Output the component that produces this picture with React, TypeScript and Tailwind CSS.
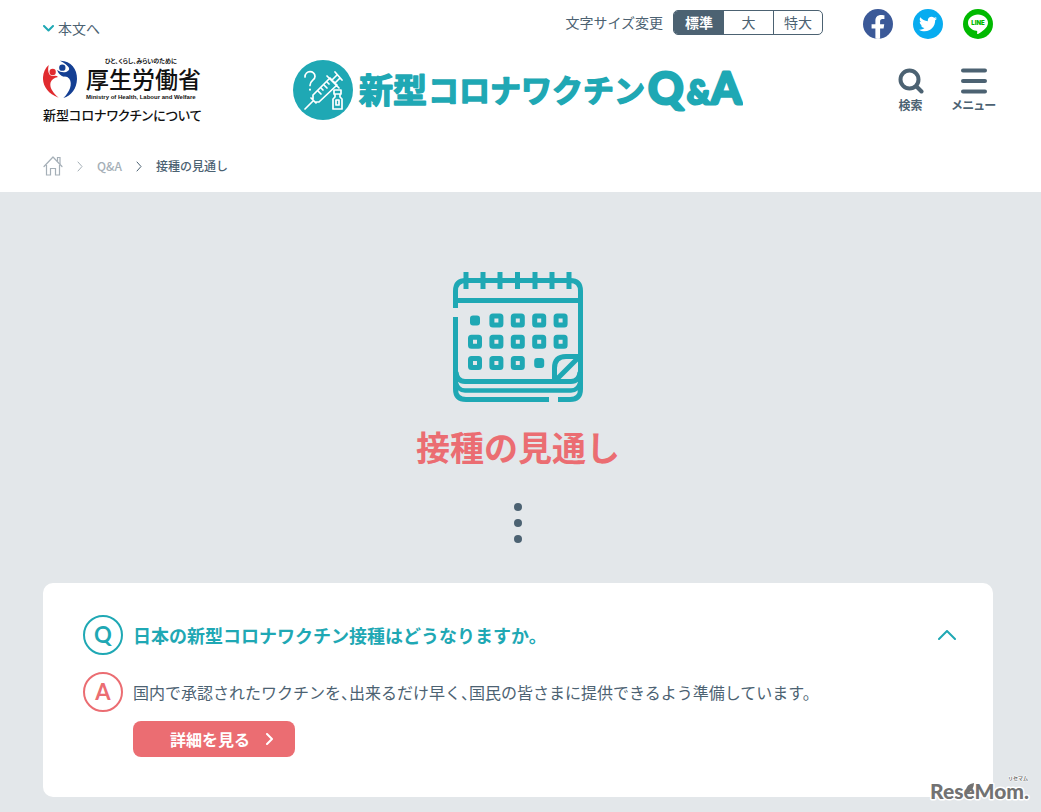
import type { ReactNode } from 'react';
import { FaFacebookF, FaTwitter } from 'react-icons/fa';

const FONT = "font-['Noto_Sans_CJK_JP',sans-serif]";

const SIZES = [
  { id: 'normal', label: '標準', width: 'w-[50px]' },
  { id: 'large', label: '大', width: 'w-[49px]' },
  { id: 'xlarge', label: '特大', width: 'w-[49px]' },
];

// kind: full = outlined day, dot = small filled day
const DAYS = [
  ['dot', 'full', 'full', 'full', 'full'],
  ['full', 'full', 'full', 'full', 'full'],
  ['full', 'full', 'full', 'dot', 'none'],
];

function MinistryLogo() {
  return (
    <svg width="162" height="67" viewBox="0 0 162 67" className="block" role="img" aria-label="厚生労働省">
      <g transform="translate(-1 3) scale(0.3333)">
        <path
          fill="#e02b2f"
          d="M20 18 C-8 44 -4 98 50 116 C30 98 22 84 26 70 Q30 58 48 54 Q44 48 32 51 Q14 50 20 18 Z"
        />
        <circle cx="32" cy="39" r="9.500" fill="#e02b2f" />
        <path
          fill="#143f93"
          d="M54 5 C86 4 106 30 105 60 C104 90 88 110 64 117 C84 98 92 74 82 59 Q76 52 66 53 Q52 50 45 33 Q60 43 74 38 Q96 28 54 5 Z"
        />
        <circle cx="61" cy="26" r="9.500" fill="#143f93" />
      </g>
      <g fill="#111" className="font-['Noto_Sans_CJK_JP',sans-serif] [font-feature-settings:'palt']">
        <text x="62" y="7" fontSize="6" fontWeight="700">
          ひと、くらし、みらいのために
        </text>
        <text x="43" y="32" fontSize="23" fontWeight="500">
          厚生労働省
        </text>
        <text x="0" y="64" fontSize="13" fontWeight="500">
          新型コロナワクチンについて
        </text>
      </g>
      <text x="43" y="43" fontSize="6" fontWeight="700" fill="#111" className="font-['Liberation_Sans',sans-serif]">
        Ministry of Health, Labour and Welfare
      </text>
    </svg>
  );
}

function SiteLogo() {
  return (
    <svg width="450" height="61" viewBox="0 0 450 61" className="block" role="img" aria-label="新型コロナワクチンQ&A">
      <circle cx="30" cy="30" r="30" fill="#1fa8b4" />
      <g fill="none" stroke="#fff" strokeWidth="1.700" strokeLinecap="round" strokeLinejoin="round">
        <path d="M12 17 C12 10 22 10 22 16.500 C22 20.500 17 20 17 25.500" />
        <path d="M17 29.500 V29.700" strokeWidth="2" />
        <path d="M12 49 L20 41 M18 38 L23 43 M20 39 L20 35 L37 18 L44 25 L26 42 L22 42 M34 16 L46 28 M39 20 L44 15 M42 23 L47 18 M42 12 L49 20" />
        <path d="M25 31 L28 34 M28 28 L30 30 M31 25 L34 28 M34 22 L36 24" />
        <path d="M41 30 H48 V34 H41 Z M42 34 V37 L40 39 V49 H49 V39 L47 37 V34" />
        <path d="M43 40 H46 V45 H43 Z" />
      </g>
      <g
        fill="#1fa8b4"
        stroke="#1fa8b4"
        strokeWidth="1.500"
        strokeLinejoin="round"
        fontWeight="700"
        className="font-['Noto_Sans_CJK_JP',sans-serif]"
      >
        <text x="66" y="43" fontSize="34">
          新型
        </text>
        <text x="135" y="42" fontSize="31">
          コロナワクチン
        </text>
      </g>
      <g
        fill="#1fa8b4"
        stroke="#1fa8b4"
        strokeWidth="3"
        strokeLinejoin="round"
        fontWeight="700"
        className="font-['Lato',sans-serif]"
      >
        <text x="355" y="44" fontSize="44">
          Q
        </text>
        <text x="394" y="44" fontSize="32">
          &amp;
        </text>
        <text x="418" y="44" fontSize="44">
          A
        </text>
      </g>
    </svg>
  );
}

function LineIcon() {
  return (
    <svg width="30" height="30" viewBox="0 0 30 30" className="block" aria-hidden>
      <circle cx="15" cy="15" r="15" fill="#00b900" />
      <path
        fill="#fff"
        d="M15 5.500 C9.500 5.500 5 9.200 5 13.700 C5 17.800 8.600 21.200 13.500 21.800 C14.500 22 14.300 22.800 14.100 24.500 C14.100 25.300 14.800 25.100 15.500 24.700 C18.500 23 25 18.800 25 13.700 C25 9.200 20.500 5.500 15 5.500 Z"
      />
      <text
        x="15"
        y="16"
        fontSize="6"
        fontWeight="900"
        fill="#00b900"
        textAnchor="middle"
        className="font-['Inter',sans-serif]"
      >
        LINE
      </text>
    </svg>
  );
}

function HomeIcon() {
  return (
    <svg width="20" height="20" viewBox="0 0 20 20" className="block" fill="none" stroke="#a5afb7" strokeWidth="1.200" aria-hidden>
      <path d="M1 10.500 L10 1 L19 10.500" strokeLinejoin="round" strokeLinecap="round" />
      <path d="M14.500 5 V1.500 H17 V8" />
      <path d="M3.500 9 V19 H7.500 V12.500 H12.500 V19 H16.500 V9" />
    </svg>
  );
}

function Chevron({ className, d, box, width = 2 }: { className: string; d: string; box: string; width?: number }) {
  return (
    <svg
      viewBox={box}
      className={`block shrink-0 ${className}`}
      fill="none"
      stroke="currentColor"
      strokeWidth={width}
      strokeLinecap="round"
      strokeLinejoin="round"
      aria-hidden
    >
      <path d={d} />
    </svg>
  );
}

function CalendarIcon() {
  return (
    <svg width="130" height="130" viewBox="0 0 130 130" className="block" fill="none" stroke="#1fa8b4" strokeWidth="5" aria-hidden>
      <path d="M2.500 36 V19 Q2.500 8.500 13 8.500 H117 Q127.500 8.500 127.500 19 V117 Q127.500 127.500 117 127.500 H105" />
      <path d="M2.500 45 V117 Q2.500 127.500 13 127.500 H96" />
      <path d="M3 28.500 H127" />
      {[13, 30, 47, 64.5, 82, 99, 116].map((x) => (
        <path key={x} d={`M${x} 0 V17`} />
      ))}
      <path d="M3 100 Q4 109.500 12 109.500 H118 Q126 109.500 127 100" />
      <path d="M3 111 Q5 118.500 12 118.500 H118 Q125 118.500 127 111" strokeWidth="4.500" />
      <path d="M101.500 109 V96 Q101.500 84.500 113 84.500 H127 M102 109 L127 84" />
      {DAYS.map((row, r) =>
        row.map((kind, c) => {
          const x = 22 + c * 21.4;
          const y = 48.5 + r * 21.2;
          if (kind === 'none') return null;
          return kind === 'dot' ? (
            <rect key={`${r}-${c}`} x={x - 5} y={y - 5} width="10" height="10" rx="3" fill="#1fa8b4" stroke="none" />
          ) : (
            <rect key={`${r}-${c}`} x={x - 4.5} y={y - 4.5} width="9" height="9" rx="1" />
          );
        }),
      )}
    </svg>
  );
}

function Badge({ color, children }: { color: string; children: ReactNode }) {
  return (
    <span
      className={`flex h-10 w-10 shrink-0 items-center justify-center rounded-full border-2 font-['Lato',sans-serif] text-[22px] leading-6 font-bold ${color}`}
    >
      {children}
    </span>
  );
}

function Watermark() {
  return (
    <svg width="104" height="34" viewBox="0 0 104 34" className="absolute right-2 bottom-1 block" role="img" aria-label="ReseMom">
      <g fill="#727272" stroke="#fff" strokeLinejoin="round" style={{ paintOrder: 'stroke' }}>
        <text x="1" y="25" fontSize="21" fontWeight="900" strokeWidth="3" className="font-['Lato',sans-serif]">
          ReseMom.
        </text>
        <text x="79" y="6" fontSize="5" fontWeight="700" strokeWidth="1" className="font-['Noto_Sans_CJK_JP',sans-serif]">
          リセマム
        </text>
      </g>
      <path d="M37 17 Q37 10 45 9 Q45 16 39 19 Z" fill="#727272" />
    </svg>
  );
}

function Comma() {
  return <span className="[font-feature-settings:'halt']">、</span>;
}

function Header() {
  return (
    <header className="bg-white pr-12 pl-[43px]">
      <div className="flex h-12 items-center">
        <a href="#main" className="mt-2 flex items-center gap-1 text-sm leading-5">
          <Chevron className="h-[7px] w-[11px] text-[#1fa8b4]" box="0 0 11 7" d="M1 1 L5.500 5.500 L10 1" />
          本文へ
        </a>
        <div className="ml-auto flex items-center gap-10">
          <div className="flex items-center gap-[10px] pb-1" role="group" aria-label="文字サイズ変更">
            <span className="text-sm leading-5">文字サイズ変更</span>
            <div className="flex h-[25px] overflow-hidden rounded-[5px] border border-[#4c6272]">
              {SIZES.map((s, i) => (
                <button
                  key={s.id}
                  type="button"
                  aria-pressed={i === 0}
                  className={`${s.width} text-sm leading-5 ${i === 0 ? 'bg-[#4c6272] font-bold text-white' : ''} ${i === 2 ? 'border-l border-[#4c6272]' : ''}`}
                >
                  {s.label}
                </button>
              ))}
            </div>
          </div>
          <div className="flex items-center gap-5">
            <a
              href="#facebook"
              aria-label="Facebook"
              className="flex h-[30px] w-[30px] items-end justify-center overflow-hidden rounded-full bg-[#3b5998] text-white"
            >
              <FaFacebookF className="h-6 w-6" />
            </a>
            <a
              href="#twitter"
              aria-label="Twitter"
              className="flex h-[30px] w-[30px] items-center justify-center rounded-full bg-[#08acf0] text-white"
            >
              <FaTwitter className="h-[18px] w-[18px]" />
            </a>
            <a href="#line" aria-label="LINE">
              <LineIcon />
            </a>
          </div>
        </div>
      </div>

      <div className="grid grid-cols-[1fr_auto_1fr] items-start pt-2">
        <a href="#top" className="justify-self-start">
          <MinistryLogo />
        </a>
        <h1 className="pt-1">
          <a href="#qa">
            <SiteLogo />
          </a>
        </h1>
        <nav className="-mr-[3px] flex gap-7 justify-self-end pt-3 text-xs leading-4 font-bold">
          <button type="button" className="flex flex-col items-center gap-[3px]">
            <svg width="26" height="26" viewBox="0 0 26 26" fill="none" stroke="currentColor" strokeWidth="4" strokeLinecap="round" aria-hidden>
              <circle cx="11.500" cy="11.500" r="9" />
              <path d="M18.500 18.500 L23.500 23.500" />
            </svg>
            検索
          </button>
          <button type="button" className="flex flex-col items-center gap-[3px] [font-feature-settings:'palt']">
            <svg width="26" height="26" viewBox="0 0 26 26" stroke="currentColor" strokeWidth="4" strokeLinecap="round" aria-hidden>
              <path d="M2 2.500 H24 M2 13 H24 M2 23.500 H24" />
            </svg>
            メニュー
          </button>
        </nav>
      </div>

      <nav aria-label="パンくず" className="flex h-[69px] items-center pt-[17px] text-xs leading-5">
        <a href="#home" aria-label="ホーム">
          <HomeIcon />
        </a>
        <Chevron className="ml-[14px] h-[11px] w-[6px] text-[#a5afb7]" box="0 0 6 11" d="M1 1 L5 5.500 L1 10" width={1} />
        <a href="#qa" className="ml-[14px] font-medium text-[#a5afb7]">
          Q&amp;A
        </a>
        <Chevron className="ml-[14px] h-[11px] w-[6px]" box="0 0 6 11" d="M1 1 L5 5.500 L1 10" width={1} />
        <span className="ml-[14px] font-medium">接種の見通し</span>
      </nav>
    </header>
  );
}

export default function App() {
  return (
    <div className={`relative min-h-screen bg-[#e3e7ea] text-[#4c6272] ${FONT}`} lang="ja">
      <Header />
      <main id="main" className="pt-20 pr-12 pb-[15px] pl-[43px]">
        <div className="flex flex-col items-center">
          <CalendarIcon />
          <h2 className="mt-5 text-[34px] leading-[50px] font-bold text-[#eb6d72]">接種の見通し</h2>
          <div className="mt-[31px] flex flex-col gap-2" aria-hidden>
            <span className="h-2 w-2 rounded-full bg-[#4c6272]" />
            <span className="h-2 w-2 rounded-full bg-[#4c6272]" />
            <span className="h-2 w-2 rounded-full bg-[#4c6272]" />
          </div>
        </div>

        <section className="mt-10 rounded-[10px] bg-white px-10 pt-8 pb-10">
          <h3>
            <button type="button" aria-expanded className="flex w-full items-center gap-[10px] text-left text-lg leading-7 font-bold text-[#1fa8b4]">
              <Badge color="border-[#1fa8b4] text-[#1fa8b4]">Q</Badge>
              <span className="flex-1">日本の新型コロナワクチン接種はどうなりますか。</span>
              <Chevron className="-mr-[3px] h-[10px] w-[18px]" box="0 0 18 10" d="M1 9 L9 1 L17 9" />
            </button>
          </h3>
          <div className="mt-[17px] flex gap-[10px]">
            <Badge color="border-[#eb6d72] text-[#eb6d72]">A</Badge>
            <div>
              <p className="text-base leading-10">
                国内で承認されたワクチンを
                <Comma />
                出来るだけ早く
                <Comma />
                国民の皆さまに提供できるよう準備しています。
              </p>
              <a
                href="#detail"
                className="mt-[9px] flex h-9 w-[162px] items-center justify-end gap-4 rounded-lg bg-[#eb6d72] pr-[22px] text-base leading-6 font-bold text-white"
              >
                詳細を見る
                <Chevron className="h-3 w-[7px]" box="0 0 7 12" d="M1 1 L6 6 L1 11" />
              </a>
            </div>
          </div>
        </section>
      </main>
      <Watermark />
    </div>
  );
}
